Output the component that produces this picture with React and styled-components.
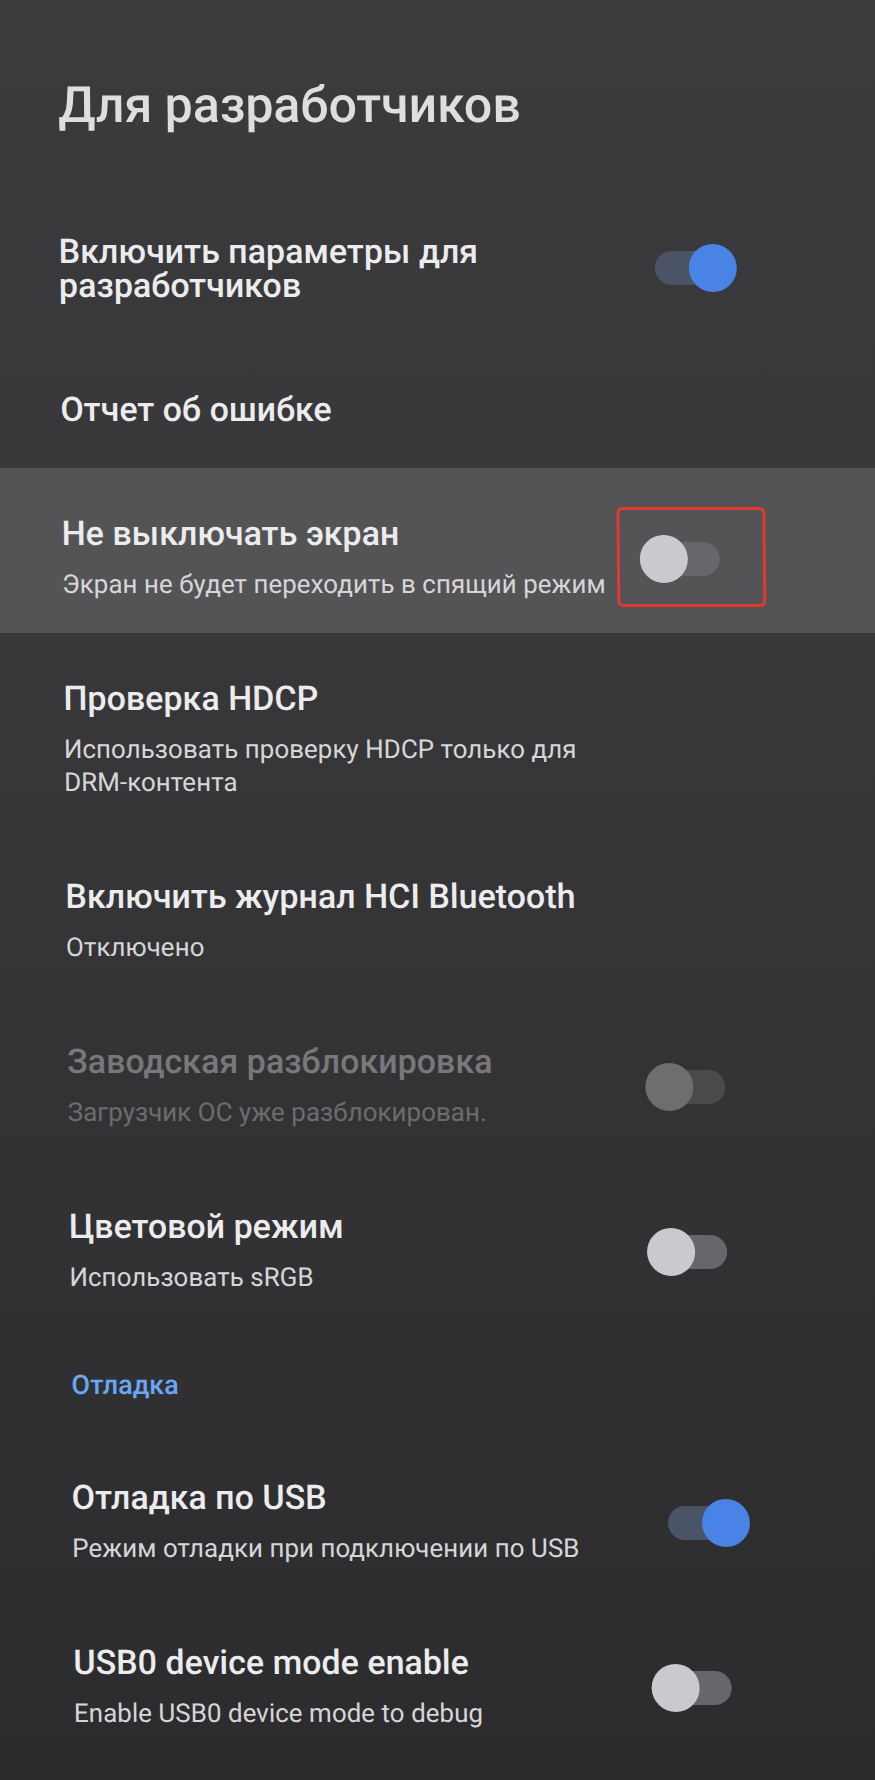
import React from 'react';
import styled, { createGlobalStyle } from 'styled-components';

const GlobalStyle = createGlobalStyle`
    html, body {
        margin: 0;
        padding: 0;
        background: #323234;
    }
    body {
        font-family: Roboto, "Noto Sans", sans-serif;
        overflow: hidden;
    }
`

const Screen = styled.div`
    width: 875px;
    height: 1780px;
    overflow: hidden;
    background: linear-gradient(180deg, #3b3b3d 0%, #363638 45%, #2c2c2e 100%);
`

const Tilted = styled.div`
    transform: skewX(0.6deg);
    transform-origin: 0 0;
`

const Heading = styled.h1`
    margin: 0 0 53px 0;
    padding: 77px 0 0 57px;
    font-size: 50px;
    line-height: 56px;
    font-weight: 500;
    color: #dedee0;
`

const Row = styled.div`
    display: flex;
    align-items: center;
    gap: 18px;
    margin: 0 -20px;
    padding: 48px 161px ${p => (p.$single ? 42 : 32)}px 76px;
    background: ${p => (p.$focused ? '#545456' : 'transparent')};
`

const TextBlock = styled.div`
    flex: 1;
    min-width: 0;
`

const Title = styled.div`
    font-size: 34px;
    line-height: 34px;
    font-weight: 500;
    color: ${p => (p.$disabled ? '#78787a' : '#ececee')};
`

const Summary = styled.div`
    margin-top: 18px;
    font-size: 26px;
    line-height: 33px;
    color: ${p => (p.$disabled ? '#6c6c6e' : '#d6d6d9')};
`

const Keep = styled.span`
    white-space: nowrap;
`

const Section = styled.div`
    padding: 43px 56px 31px 57px;
    font-size: 27px;
    line-height: 32px;
    font-weight: 500;
    color: #6aa6f2;
`

const SwitchBox = styled.div`
    position: relative;
    flex: none;
    width: 100px;
    height: 48px;
    display: flex;
    align-items: center;
`

const Track = styled.div`
    width: 80px;
    height: 34px;
    border-radius: 17px;
    margin-left: ${p => (p.$on ? 18 : 0)}px;
    background: ${p => (p.$on ? '#4a5466' : p.$disabled ? '#4a4a4c' : '#67676b')};
`

const Knob = styled.div`
    position: absolute;
    top: 0;
    ${p => (p.$on ? 'right: 0;' : 'left: 0;')}
    width: 48px;
    height: 48px;
    border-radius: 50%;
    background: ${p => (p.$on ? '#4a83e6' : p.$disabled ? '#6e6e70' : '#cacace')};
`

const Mark = styled.div`
    position: absolute;
    top: -28px;
    bottom: -24px;
    left: -23px;
    right: -26px;
    border: 3px solid #e23a31;
    border-radius: 6px;
`

const Switch = ({ on, disabled, marked }) => (
    <SwitchBox>
        <Track $on={on} $disabled={disabled} />
        <Knob $on={on} $disabled={disabled} />
        {marked && <Mark />}
    </SwitchBox>
)

const items = [
    { title: 'Включить параметры для разработчиков', toggle: true, on: true },
    { title: 'Отчет об ошибке' },
    { title: 'Не выключать экран', summary: 'Экран не будет переходить в спящий режим', toggle: true, focused: true, marked: true },
    { title: 'Проверка HDCP', summary: <>Использовать проверку HDCP только для <Keep>DRM-контента</Keep></> },
    { title: 'Включить журнал HCI Bluetooth', summary: 'Отключено' },
    { title: 'Заводская разблокировка', summary: 'Загрузчик ОС уже разблокирован.', toggle: true, disabled: true },
    { title: 'Цветовой режим', summary: 'Использовать sRGB', toggle: true },
    { section: 'Отладка' },
    { title: 'Отладка по USB', summary: 'Режим отладки при подключении по USB', toggle: true, on: true },
    { title: 'USB0 device mode enable', summary: 'Enable USB0 device mode to debug', toggle: true },
]

const App = () => {
    return (
        <Screen>
            <GlobalStyle />
            <Tilted>
                <Heading>Для разработчиков</Heading>
                {items.map((item, i) =>
                    item.section ? (
                        <Section key={i}>{item.section}</Section>
                    ) : (
                        <Row key={i} $single={!item.summary} $focused={item.focused}>
                            <TextBlock>
                                <Title $disabled={item.disabled}>{item.title}</Title>
                                {item.summary && <Summary $disabled={item.disabled}>{item.summary}</Summary>}
                            </TextBlock>
                            {item.toggle && <Switch on={item.on} disabled={item.disabled} marked={item.marked} />}
                        </Row>
                    )
                )}
            </Tilted>
        </Screen>
    );
}

export default App;
